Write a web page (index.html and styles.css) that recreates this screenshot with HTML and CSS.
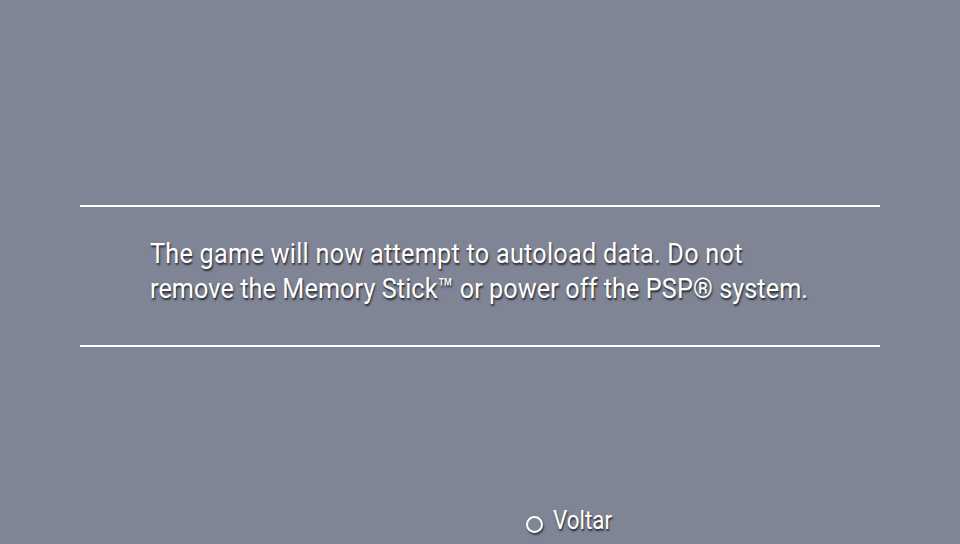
FILE: index.html
```html
<!DOCTYPE html>
<html>
<head>
<meta charset="utf-8">
<link rel="stylesheet" href="styles.css">
</head>
<body>
<div class="screen">
  <div class="dialog">
    <p class="message"><span class="line line-first">The game will now attempt to autoload data. Do not</span><span class="line">remove the Memory Stick™ or power off the PSP® system.</span></p>
  </div>
  <div class="footer">
    <span class="circle"></span>
    <span class="label">Voltar</span>
  </div>
</div>
</body>
</html>
```
FILE: styles.css
```css
html, body {
  margin: 0;
  padding: 0;
  background: #7f8595;
}
.screen {
  width: 960px;
  height: 544px;
  position: relative;
  font-family: Roboto, "Liberation Sans", sans-serif;
  color: #fff;
  overflow: hidden;
}
.dialog {
  position: absolute;
  left: 80px;
  top: 205px;
  width: 800px;
  height: 138px;
  border-top: 2px solid #fff;
  border-bottom: 2px solid #fff;
}
.message {
  margin: 29px 0 0 70px;
  font-size: 28px;
  line-height: 35px;
  letter-spacing: 0.1px;
  white-space: nowrap;
  transform: scaleX(0.9);
  transform-origin: left top;
  text-shadow: 1px 2px 2px rgba(30, 32, 40, 0.9);
}
.line {
  display: block;
}
.line-first {
  letter-spacing: 0.3px;
}
.footer {
  position: absolute;
  left: 526px;
  top: 504px;
  display: flex;
  align-items: center;
  gap: 10px;
}
.circle {
  width: 13px;
  height: 13px;
  border: 2.5px solid #fff;
  border-radius: 50%;
  margin-top: 9px;
  box-shadow: 1px 2px 2px rgba(30, 32, 40, 0.7);
}
.label {
  font-size: 26px;
  line-height: 32px;
  transform: scaleX(0.86);
  transform-origin: left center;
  text-shadow: 1px 2px 2px rgba(30, 32, 40, 0.9);
}
```
